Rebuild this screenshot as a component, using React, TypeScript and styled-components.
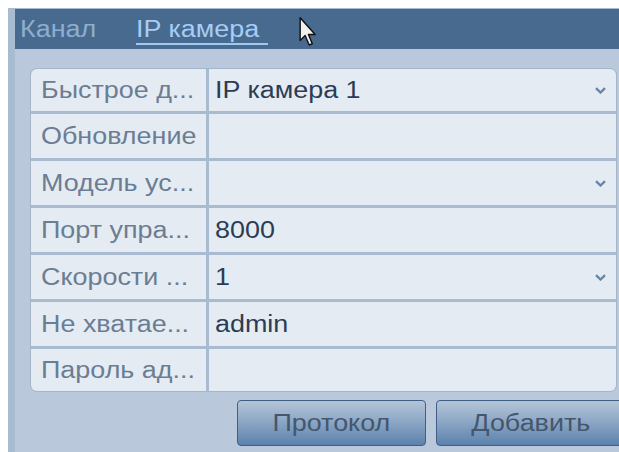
import React from "react";
import styled, { createGlobalStyle } from "styled-components";

const Global = createGlobalStyle`
  html, body {
    margin: 0;
    padding: 0;
    background: #ffffff;
    overflow: hidden;
  }
  body {
    font-family: "Liberation Sans", Arial, sans-serif;
  }
`;

const Screen = styled.div`
  width: 619px;
  height: 452px;
  padding: 8px 0 0 8px;
  box-sizing: border-box;
  overflow: hidden;
`;

const Window = styled.div`
  display: flex;
  flex-direction: column;
  height: 100%;
  margin-right: -8px;
  border-left: 7px solid #a9bbd0;
  border-top: 1px solid #a9bbd0;
  background: #b9c8da;
  overflow: hidden;
`;

/* The DVR menu font is drawn wide; the glyphs are stretched horizontally. */
const Wide = styled.span<{ $origin?: string }>`
  display: inline-block;
  transform: scaleX(1.17);
  transform-origin: ${(p) => p.$origin ?? "left"} center;
  white-space: nowrap;
`;

const Header = styled.div`
  position: relative;
  display: grid;
  grid-template-columns: 116px auto;
  align-items: center;
  height: 40px;
  padding-left: 5px;
  background: #486a8e;
  flex-shrink: 0;
`;

const Tab = styled.span<{ $active?: boolean }>`
  position: relative;
  justify-self: start;
  font-size: 23px;
  line-height: 40px;
  color: ${(p) => (p.$active ? "#a6cdf5" : "#8eaed0")};
  ${(p) =>
    p.$active &&
    `&::after {
      content: "";
      position: absolute;
      left: 0;
      width: 132px;
      bottom: 4px;
      height: 2px;
      background: #9ec9f3;
    }`}
`;

const Cursor = styled.svg`
  position: absolute;
  left: 284px;
  top: 8px;
`;

const Body = styled.div`
  display: flex;
  flex-direction: column;
  gap: 8px;
  padding: 19px 0 0 15px;
  width: 602px;
  box-sizing: border-box;
`;

const Table = styled.div`
  display: grid;
  grid-template-columns: 175px 1fr;
  grid-template-rows: 42px repeat(5, 44px) 42px;
  gap: 3px;
  width: 587px;
  box-sizing: border-box;
  background: #a9bbd0;
  border: 1px solid #a3b6cc;
  border-radius: 7px;
  overflow: hidden;
`;

const Cell = styled.div<{ $label?: boolean }>`
  display: flex;
  align-items: center;
  justify-content: space-between;
  padding: 0 ${(p) => (p.$label ? "6px 0 10px" : "10px 0 6px")};
  background: #e5ebf3;
  font-size: 23px;
  color: ${(p) => (p.$label ? "#6b7d92" : "#2b3d54")};
  white-space: nowrap;
  overflow: hidden;
`;

const Chevron = styled.svg`
  flex-shrink: 0;
`;

const ButtonRow = styled.div`
  display: flex;
  justify-content: flex-end;
  gap: 10px;
  margin-right: -8px;
`;

const Button = styled.button`
  width: 189px;
  height: 46px;
  flex-shrink: 0;
  border: 1px solid #3f5f85;
  border-radius: 4px;
  background: linear-gradient(#b4c5d9 0%, #8ea8c6 45%, #5b82ad 100%);
  font-family: "Liberation Sans", Arial, sans-serif;
  font-size: 23px;
  color: #44576d;
  padding: 0;
`;

const rows: { label: string; value: string; select?: boolean }[] = [
  { label: "Быстрое д...", value: "IP камера 1", select: true },
  { label: "Обновление", value: "" },
  { label: "Модель ус...", value: "", select: true },
  { label: "Порт упра...", value: "8000" },
  { label: "Скорости ...", value: "1", select: true },
  { label: "Не хватае...", value: "admin" },
  { label: "Пароль ад...", value: "" },
];

const Down = () => (
  <Chevron width="11" height="7" viewBox="0 0 11 7">
    <path d="M1 1.2 L5.5 5.5 L10 1.2" fill="none" stroke="#6a86a6" strokeWidth="2.4" />
  </Chevron>
);

export default function App() {
  return (
    <>
      <Global />
      <Screen>
        <Window>
          <Header>
            <Tab>
              <Wide>Канал</Wide>
            </Tab>
            <Tab $active>
              <Wide>IP камера</Wide>
            </Tab>
            <Cursor width="18" height="30" viewBox="0 0 12 21">
              <path
                d="M0.5 0.5 L0.5 16.5 L4 13 L6.8 19.6 L9 18.7 L6.3 12.2 L11 12.2 Z"
                fill="#f0f0f0"
                stroke="#111"
                strokeWidth="1"
                strokeLinejoin="round"
              />
            </Cursor>
          </Header>
          <Body>
            <Table>
              {rows.map((r) => (
                <React.Fragment key={r.label}>
                  <Cell $label>
                    <Wide>{r.label}</Wide>
                  </Cell>
                  <Cell>
                    <Wide>{r.value}</Wide>
                    {r.select && <Down />}
                  </Cell>
                </React.Fragment>
              ))}
            </Table>
            <ButtonRow>
              <Button>
                <Wide $origin="center">Протокол</Wide>
              </Button>
              <Button>
                <Wide $origin="center">Добавить</Wide>
              </Button>
            </ButtonRow>
          </Body>
        </Window>
      </Screen>
    </>
  );
}
